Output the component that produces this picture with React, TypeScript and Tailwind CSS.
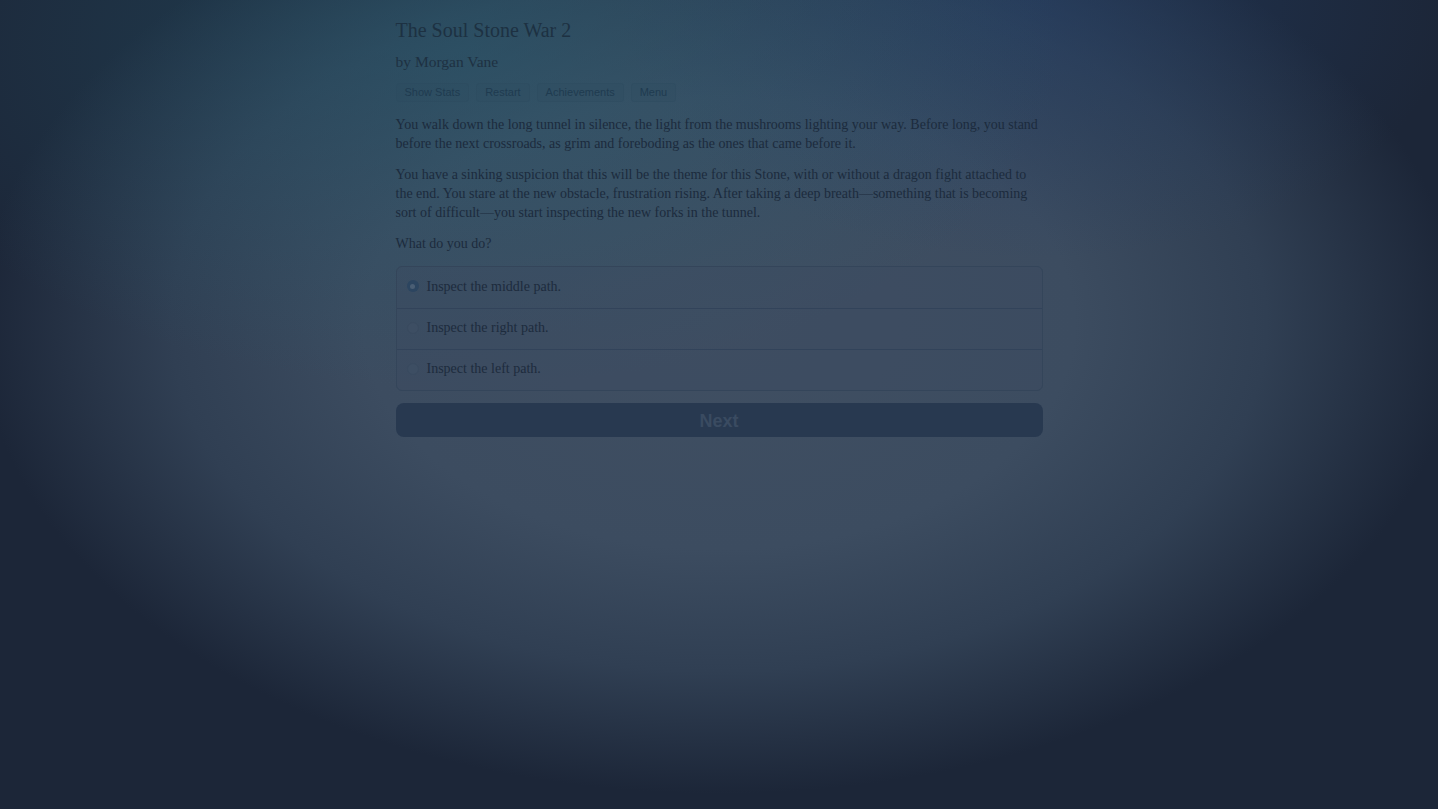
import { useState } from 'react'

const LINKS = ['Show Stats', 'Restart', 'Achievements', 'Menu']

const CHOICES = [
  'Inspect the middle path.',
  'Inspect the right path.',
  'Inspect the left path.',
]

export default function App() {
  const [choice, setChoice] = useState(0)

  return (
    <div className="min-h-[809px] w-full bg-[#1c2638] bg-[radial-gradient(ellipse_600px_340px_at_32%_6%,rgba(38,92,112,0.5),rgba(38,92,112,0)_100%),radial-gradient(ellipse_420px_260px_at_72%_0%,rgba(36,64,104,0.55),rgba(36,64,104,0)_100%),radial-gradient(ellipse_740px_470px_at_50%_40%,#404f62_0%,#3c4c60_48%,#303f53_74%,#1c2638_100%)] font-['Liberation_Serif',serif]">
      <div className="mx-auto w-[647px] pt-[17px]">
        {/* Header */}
        <h1 className="text-[20px] leading-[26px] text-[#1d3142]">The Soul Stone War 2</h1>
        <p className="mt-[8px] text-[15.5px] leading-[21px] text-[#1e3142]">by Morgan Vane</p>

        <div className="mt-[11px] flex gap-[7px]">
          {LINKS.map((l) => (
            <button
              key={l}
              className="rounded-[3px] border border-[#2c4a5e]/30 bg-[#2b4b60]/20 px-[8px] py-[1px] font-['Liberation_Sans',sans-serif] text-[11px] leading-[15px] text-[#1f3b50]"
            >
              {l}
            </button>
          ))}
        </div>

        {/* Story */}
        <div className="mt-[13px] text-[14px] leading-[19px] text-[#1c2b3d]">
          <p>
            You walk down the long tunnel in silence, the light from the mushrooms lighting your way. Before long, you stand
            before the next crossroads, as grim and foreboding as the ones that came before it.
          </p>
          <p className="mt-[12px]">
            You have a sinking suspicion that this will be the theme for this Stone, with or without a dragon fight attached to
            the end. You stare at the new obstacle, frustration rising. After taking a deep breath—something that is becoming
            sort of difficult—you start inspecting the new forks in the tunnel.
          </p>
          <p className="mt-[12px]">What do you do?</p>
        </div>

        {/* Choices */}
        <div className="mt-[13px] overflow-hidden rounded-[6px] border border-[#34455a] bg-[#3b4c61]/40">
          {CHOICES.map((c, i) => (
            <label
              key={c}
              onClick={() => setChoice(i)}
              className={`flex h-[41px] cursor-pointer items-center gap-[8px] px-[10px] pb-[3px] ${i > 0 ? 'border-t border-[#32435a]' : ''}`}
            >
              <span
                className={`flex h-[12px] w-[12px] items-center justify-center rounded-full ${
                  i === choice ? 'bg-[#2c4560]' : 'border border-[#394a5f] bg-[#3d4e63]'
                }`}
              >
                {i === choice && <span className="h-[5px] w-[5px] rounded-full bg-[#4a5e74]" />}
              </span>
              <span className="text-[14px] leading-[19px] text-[#1d2b3d]">{c}</span>
            </label>
          ))}
        </div>

        <button className="mt-[12px] h-[34px] w-full rounded-[8px] bg-[#283950] pt-[3px] font-['Liberation_Sans',sans-serif] text-[18px] font-bold text-[#3a4b61]">
          Next
        </button>
      </div>
    </div>
  )
}
